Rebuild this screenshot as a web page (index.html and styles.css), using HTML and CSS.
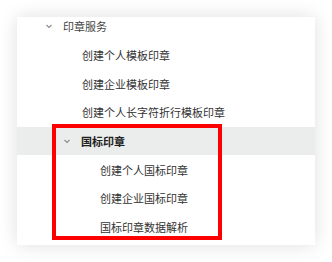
FILE: index.html
```html
<!DOCTYPE html>
<html lang="zh-CN">
<head>
    <meta charset="UTF-8">
    <title>印章服务菜单</title>
    <link rel="stylesheet" href="styles.css">
</head>
<body>
<div class="page">
    <div class="card">
        <ul class="menu">
            <li class="row title lv1">
                <svg class="arrow" viewBox="0 0 12 12"><polyline points="3.5,5 6,7.5 8.5,5"/></svg>
                <span>印章服务</span>
            </li>
            <li class="row item lv2">创建个人模板印章</li>
            <li class="row item lv2">创建企业模板印章</li>
            <li class="row item lv2">创建个人长字符折行模板印章</li>
            <li class="row title lv2 active">
                <svg class="arrow" viewBox="0 0 12 12"><polyline points="3.5,5 6,7.5 8.5,5"/></svg>
                <span>国标印章</span>
            </li>
            <li class="row item lv3">创建个人国标印章</li>
            <li class="row item lv3">创建企业国标印章</li>
            <li class="row item lv3">国标印章数据解析</li>
        </ul>
        <div class="mark"></div>
    </div>
</div>
</body>
</html>
```
FILE: styles.css
```css
body {
    margin: 0;
    background: #fff;
    font-family: "Noto Sans CJK SC", "Noto Sans", sans-serif;
}

.page {
    padding: 17px;
}

.card {
    position: relative;
    width: 298px;
    height: 228px;
    background: #fff;
    box-shadow: 0 0 18px rgba(0, 0, 0, 0.13);
    overflow: hidden;
}

.menu {
    list-style: none;
    margin: -5px 0 0;
    padding: 0;
}

.row {
    display: flex;
    align-items: center;
    height: 28.7px;
    font-size: 11px;
    color: #333;
    white-space: nowrap;
}

.arrow {
    width: 12px;
    height: 12px;
    margin-right: 8px;
    fill: none;
    stroke: #8a8a8a;
    stroke-width: 1.1;
}

.title.lv1 { padding-left: 26px; color: #444; }
.title.lv2 { padding-left: 44px; }
.item.lv2 { padding-left: 65px; }
.item.lv3 { padding-left: 83px; }

.active {
    background: #ebecec;
    font-weight: bold;
    color: #222;
}

.mark {
    position: absolute;
    left: 35px;
    top: 107px;
    width: 162px;
    height: 108px;
    border: 4px solid #ff0000;
}
```
